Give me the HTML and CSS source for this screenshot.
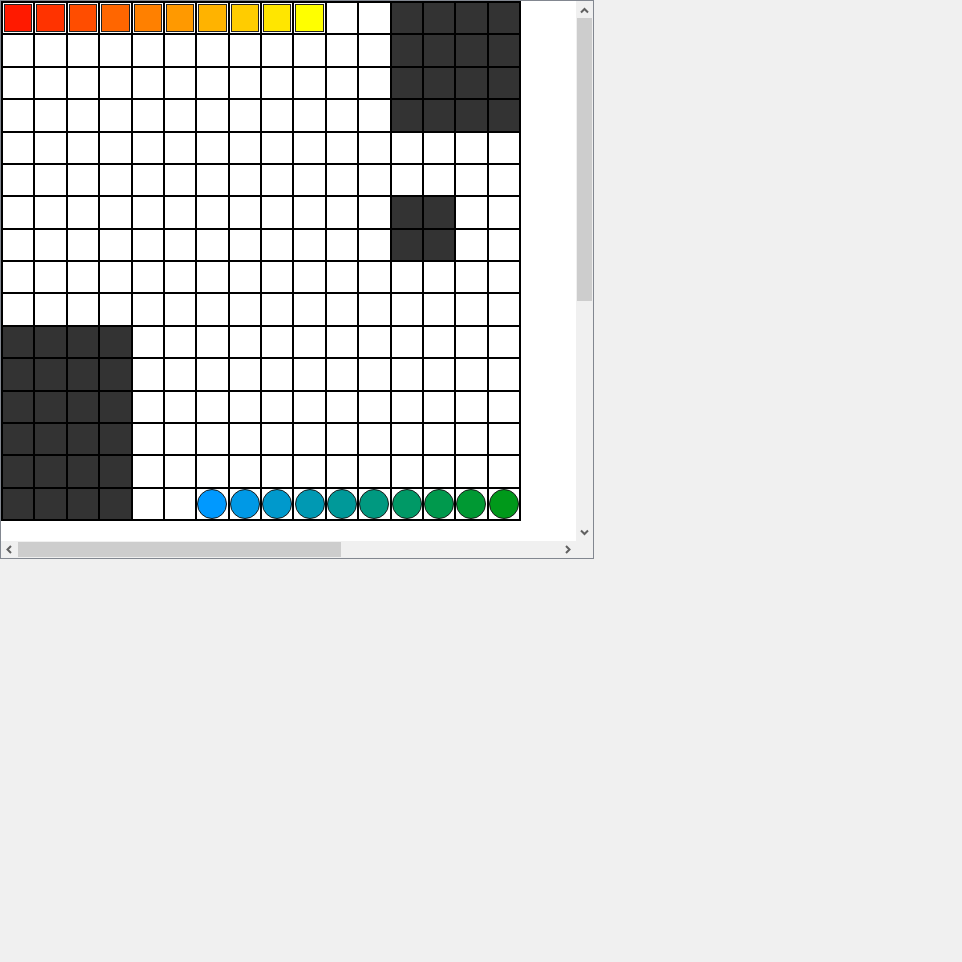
FILE: index.html
```html
<!DOCTYPE html>
<html>
<head>
<meta charset="utf-8">
<link rel="stylesheet" href="styles.css">
</head>
<body>
<div class="frame">
  <div class="view">
    <div class="board">
      <div class="s"><span style="--c:#ff1a00"></span></div><div class="s"><span style="--c:#ff3300"></span></div><div class="s"><span style="--c:#ff4d00"></span></div><div class="s"><span style="--c:#ff6600"></span></div><div class="s"><span style="--c:#ff8000"></span></div><div class="s"><span style="--c:#ff9900"></span></div><div class="s"><span style="--c:#ffb300"></span></div><div class="s"><span style="--c:#ffcc00"></span></div><div class="s"><span style="--c:#ffe600"></span></div><div class="s"><span style="--c:#ffff00"></span></div><div class="c"></div><div class="c"></div><div class="d"></div><div class="d"></div><div class="d"></div><div class="d"></div>
      <div class="c"></div><div class="c"></div><div class="c"></div><div class="c"></div><div class="c"></div><div class="c"></div><div class="c"></div><div class="c"></div><div class="c"></div><div class="c"></div><div class="c"></div><div class="c"></div><div class="d"></div><div class="d"></div><div class="d"></div><div class="d"></div>
      <div class="c"></div><div class="c"></div><div class="c"></div><div class="c"></div><div class="c"></div><div class="c"></div><div class="c"></div><div class="c"></div><div class="c"></div><div class="c"></div><div class="c"></div><div class="c"></div><div class="d"></div><div class="d"></div><div class="d"></div><div class="d"></div>
      <div class="c"></div><div class="c"></div><div class="c"></div><div class="c"></div><div class="c"></div><div class="c"></div><div class="c"></div><div class="c"></div><div class="c"></div><div class="c"></div><div class="c"></div><div class="c"></div><div class="d"></div><div class="d"></div><div class="d"></div><div class="d"></div>
      <div class="c"></div><div class="c"></div><div class="c"></div><div class="c"></div><div class="c"></div><div class="c"></div><div class="c"></div><div class="c"></div><div class="c"></div><div class="c"></div><div class="c"></div><div class="c"></div><div class="c"></div><div class="c"></div><div class="c"></div><div class="c"></div>
      <div class="c"></div><div class="c"></div><div class="c"></div><div class="c"></div><div class="c"></div><div class="c"></div><div class="c"></div><div class="c"></div><div class="c"></div><div class="c"></div><div class="c"></div><div class="c"></div><div class="c"></div><div class="c"></div><div class="c"></div><div class="c"></div>
      <div class="c"></div><div class="c"></div><div class="c"></div><div class="c"></div><div class="c"></div><div class="c"></div><div class="c"></div><div class="c"></div><div class="c"></div><div class="c"></div><div class="c"></div><div class="c"></div><div class="d"></div><div class="d"></div><div class="c"></div><div class="c"></div>
      <div class="c"></div><div class="c"></div><div class="c"></div><div class="c"></div><div class="c"></div><div class="c"></div><div class="c"></div><div class="c"></div><div class="c"></div><div class="c"></div><div class="c"></div><div class="c"></div><div class="d"></div><div class="d"></div><div class="c"></div><div class="c"></div>
      <div class="c"></div><div class="c"></div><div class="c"></div><div class="c"></div><div class="c"></div><div class="c"></div><div class="c"></div><div class="c"></div><div class="c"></div><div class="c"></div><div class="c"></div><div class="c"></div><div class="c"></div><div class="c"></div><div class="c"></div><div class="c"></div>
      <div class="c"></div><div class="c"></div><div class="c"></div><div class="c"></div><div class="c"></div><div class="c"></div><div class="c"></div><div class="c"></div><div class="c"></div><div class="c"></div><div class="c"></div><div class="c"></div><div class="c"></div><div class="c"></div><div class="c"></div><div class="c"></div>
      <div class="d"></div><div class="d"></div><div class="d"></div><div class="d"></div><div class="c"></div><div class="c"></div><div class="c"></div><div class="c"></div><div class="c"></div><div class="c"></div><div class="c"></div><div class="c"></div><div class="c"></div><div class="c"></div><div class="c"></div><div class="c"></div>
      <div class="d"></div><div class="d"></div><div class="d"></div><div class="d"></div><div class="c"></div><div class="c"></div><div class="c"></div><div class="c"></div><div class="c"></div><div class="c"></div><div class="c"></div><div class="c"></div><div class="c"></div><div class="c"></div><div class="c"></div><div class="c"></div>
      <div class="d"></div><div class="d"></div><div class="d"></div><div class="d"></div><div class="c"></div><div class="c"></div><div class="c"></div><div class="c"></div><div class="c"></div><div class="c"></div><div class="c"></div><div class="c"></div><div class="c"></div><div class="c"></div><div class="c"></div><div class="c"></div>
      <div class="d"></div><div class="d"></div><div class="d"></div><div class="d"></div><div class="c"></div><div class="c"></div><div class="c"></div><div class="c"></div><div class="c"></div><div class="c"></div><div class="c"></div><div class="c"></div><div class="c"></div><div class="c"></div><div class="c"></div><div class="c"></div>
      <div class="d"></div><div class="d"></div><div class="d"></div><div class="d"></div><div class="c"></div><div class="c"></div><div class="c"></div><div class="c"></div><div class="c"></div><div class="c"></div><div class="c"></div><div class="c"></div><div class="c"></div><div class="c"></div><div class="c"></div><div class="c"></div>
      <div class="d"></div><div class="d"></div><div class="d"></div><div class="d"></div><div class="c"></div><div class="c"></div><div class="o"><span style="--c:#0099ff"></span></div><div class="o"><span style="--c:#0099e6"></span></div><div class="o"><span style="--c:#0099cc"></span></div><div class="o"><span style="--c:#0099b3"></span></div><div class="o"><span style="--c:#009999"></span></div><div class="o"><span style="--c:#009980"></span></div><div class="o"><span style="--c:#009966"></span></div><div class="o"><span style="--c:#00994d"></span></div><div class="o"><span style="--c:#009933"></span></div><div class="o"><span style="--c:#00991a"></span></div>
    </div>
  </div>
  <div class="vbar">
    <div class="btn"><svg width="17" height="17" viewBox="0 0 17 17"><path d="M5 11.5L8.5 8L12 11.5" fill="none" stroke="#606060" stroke-width="2"/></svg></div>
    <div class="track"><div class="vthumb"></div></div>
    <div class="btn"><svg width="17" height="17" viewBox="0 0 17 17"><path d="M5 6.5L8.5 10L12 6.5" fill="none" stroke="#606060" stroke-width="2"/></svg></div>
  </div>
  <div class="hbar">
    <div class="btn"><svg width="17" height="17" viewBox="0 0 17 17"><path d="M10 5L6.5 8.5L10 12" fill="none" stroke="#606060" stroke-width="2"/></svg></div>
    <div class="track"><div class="hthumb"></div></div>
    <div class="btn"><svg width="17" height="17" viewBox="0 0 17 17"><path d="M7 5L10.5 8.5L7 12" fill="none" stroke="#606060" stroke-width="2"/></svg></div>
  </div>
  <div class="corner"></div>
</div>
</body>
</html>
```
FILE: styles.css
```css
html, body {
  margin: 0;
  background: #f0f0f0;
}

.frame {
  width: 592px;
  height: 557px;
  border: 1px solid #828790;
  background: #ffffff;
  display: grid;
  grid-template-columns: 575px 17px;
  grid-template-rows: 540px 17px;
}

.view {
  overflow: hidden;
  background: #ffffff;
}

.board {
  width: 520px;
  height: 520px;
  box-sizing: border-box;
  background: #000000;
  padding: 2px;
  display: grid;
  grid-template-columns: repeat(16, 1fr);
  grid-template-rows: repeat(16, 1fr);
  gap: 2px;
}

.c {
  background: #ffffff;
}

.d {
  background: #333333;
}

.s {
  background: #ffffff;
  padding: 1px;
}

.s span {
  display: block;
  height: 100%;
  box-sizing: border-box;
  border: 1px solid #222222;
  background: var(--c);
}

.o {
  background: #ffffff;
  display: flex;
  align-items: center;
  justify-content: center;
}

.o span {
  display: block;
  width: 30px;
  height: 30px;
  box-sizing: border-box;
  border-radius: 50%;
  border: 1px solid #1a1a1a;
  background: var(--c);
}

.vbar {
  background: #f0f0f0;
  display: flex;
  flex-direction: column;
}

.hbar {
  background: #f0f0f0;
  display: flex;
  flex-direction: row;
}

.btn {
  width: 17px;
  height: 17px;
  flex: none;
}

.btn svg {
  display: block;
}

.track {
  flex: 1;
  display: flex;
}

.vbar .track {
  flex-direction: column;
}

.vthumb {
  height: 283px;
  margin: 0 1px;
  background: #cdcdcd;
}

.hthumb {
  width: 323px;
  margin: 1px 0;
  background: #cdcdcd;
}

.corner {
  background: #f0f0f0;
}
```
